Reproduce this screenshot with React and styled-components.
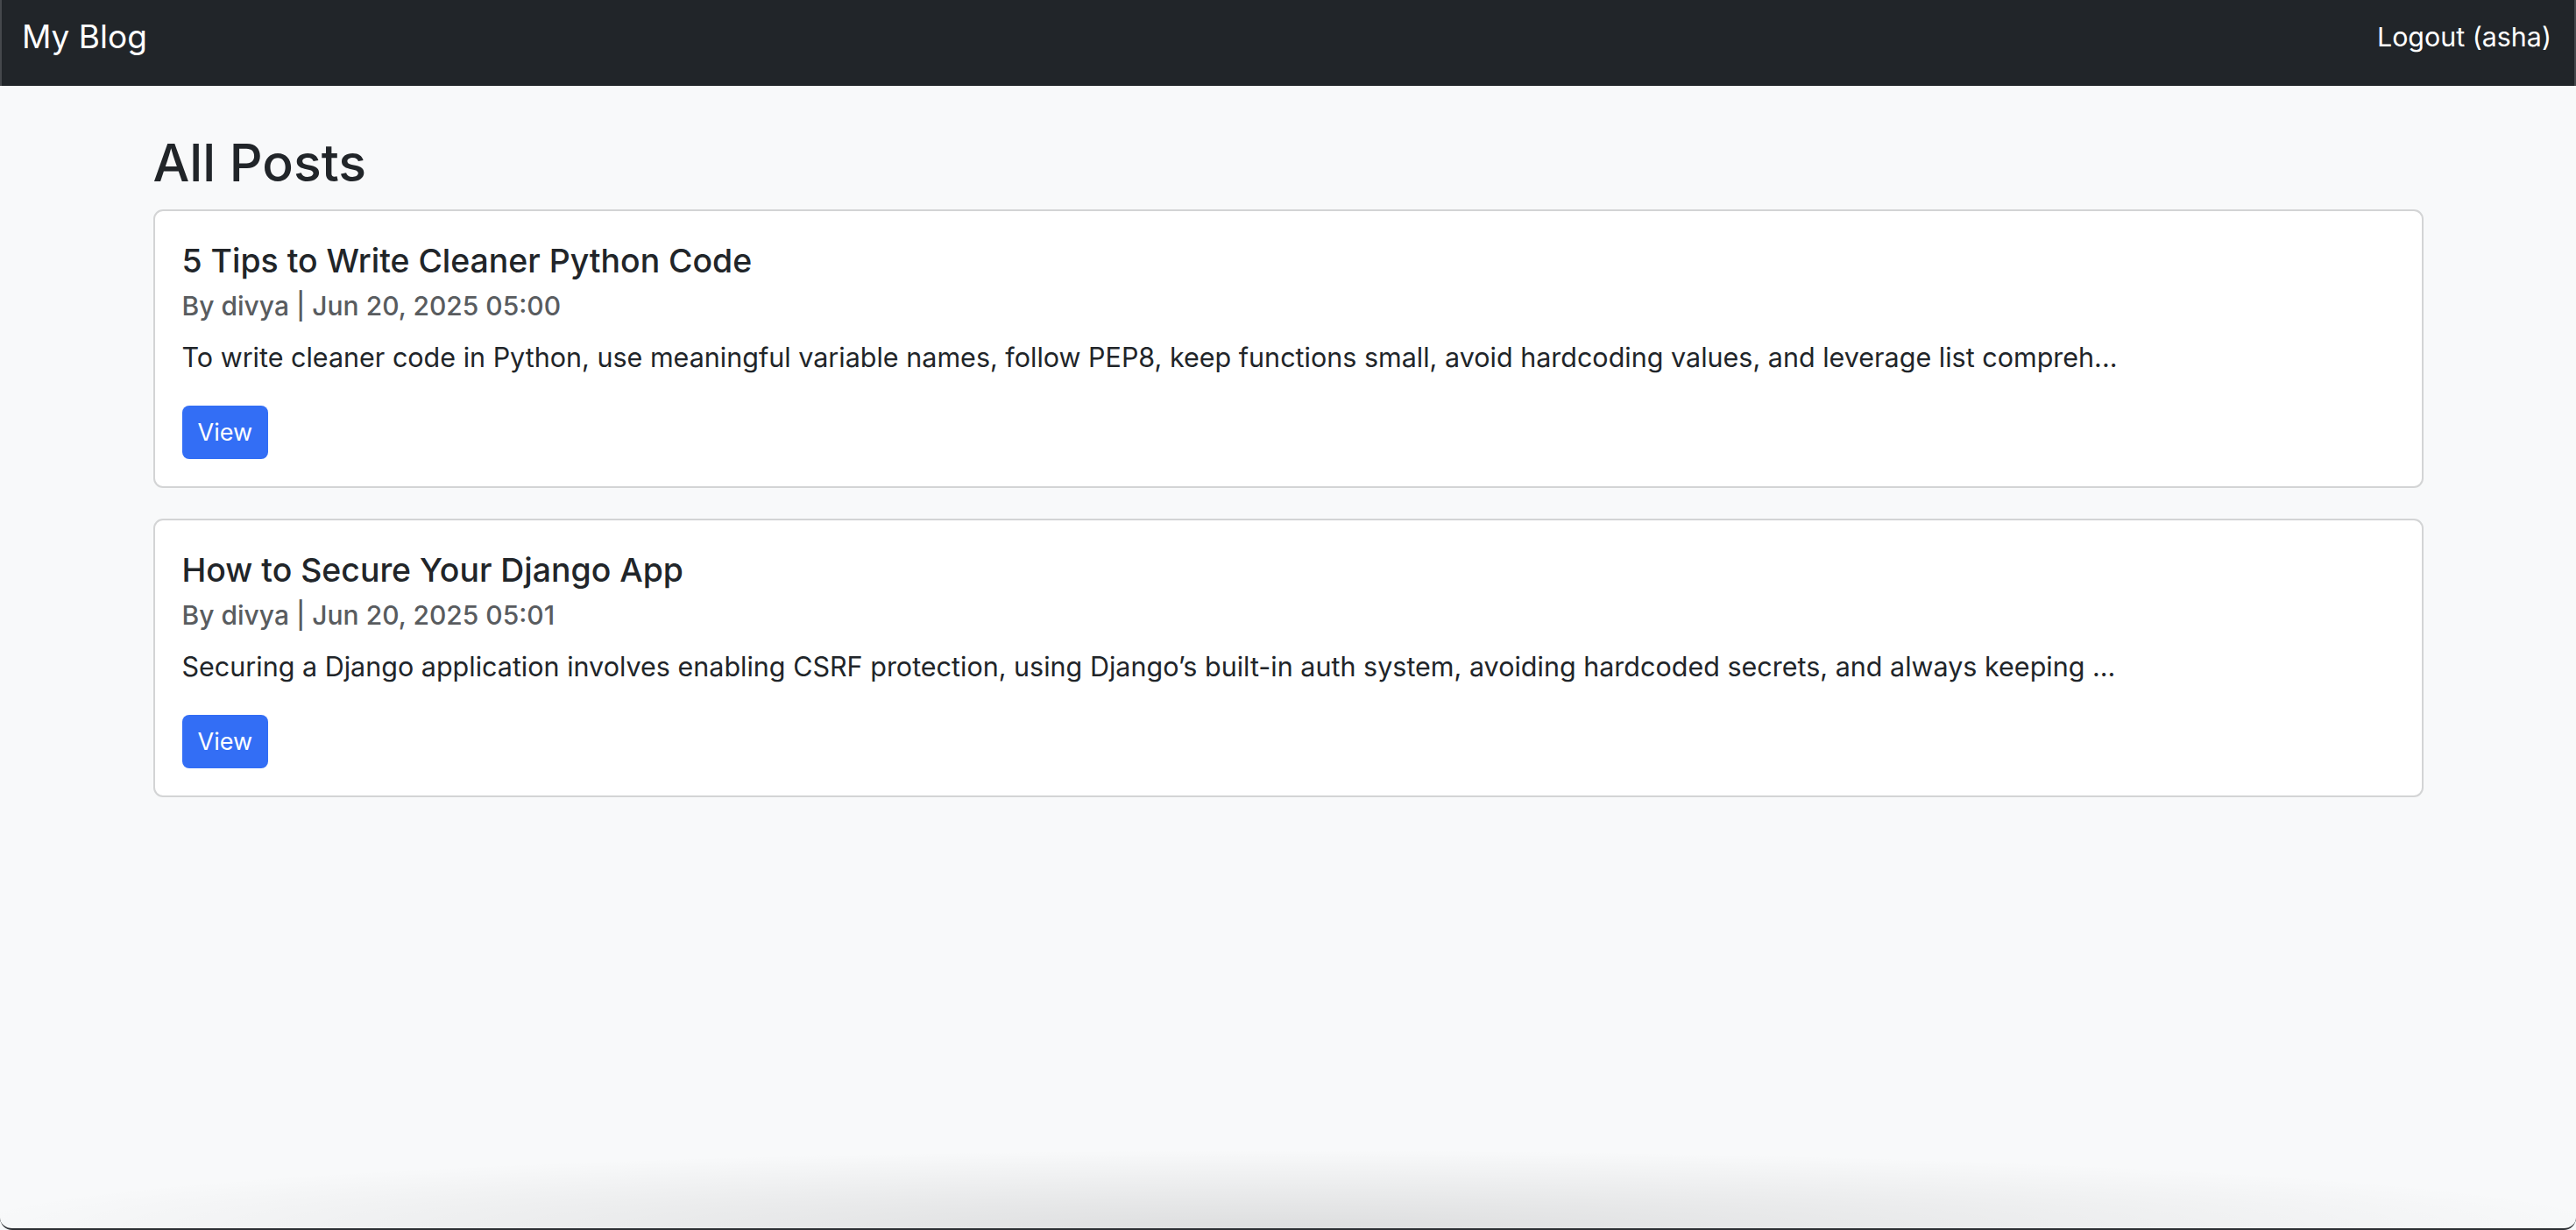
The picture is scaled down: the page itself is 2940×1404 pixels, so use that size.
import React from 'react'
import styled, { createGlobalStyle } from 'styled-components'

const GlobalStyle = createGlobalStyle`
    * {
        box-sizing: border-box;
    }
    body {
        margin: 0;
        font-family: Inter, "Noto Sans", sans-serif;
        color: #212529;
        background: #f8f9fa;
    }
`;

const Page = styled.div`
    min-height: 1404px;
    background:
        radial-gradient(ellipse 52% 90px at 50% 100%, rgba(0, 0, 0, 0.11), rgba(0, 0, 0, 0) 100%),
        #f8f9fa;
    border-bottom: 2px solid #2b2e32;
    border-radius: 0 0 14px 14px;
`;

const Navbar = styled.nav`
    height: 98px;
    display: flex;
    align-items: center;
    justify-content: space-between;
    padding: 0 26px 14px 23px;
    background: #212529;
    border-left: 2px solid #45484c;
    border-right: 2px solid #45484c;
`;

const Brand = styled.a`
    font-size: 37px;
    line-height: 48px;
    color: #fff;
    text-decoration: none;
`;

const NavLink = styled.a`
    font-size: 30.4px;
    line-height: 37px;
    color: #fff;
    text-decoration: none;
`;

const Container = styled.main`
    max-width: 2591px;
    margin: 0 auto;
    padding-top: 50px;
`;

const Heading = styled.h2`
    margin: 0 0 15px;
    font-size: 59px;
    line-height: 76px;
    font-weight: 500;
`;

const PostCard = styled.article`
    background: #fff;
    border: 2px solid #d3d4d5;
    border-radius: 11px;
    padding: 33px 31px 31px;
    margin-bottom: 35px;
`;

const PostTitle = styled.h5`
    margin: 0 0 9px;
    font-size: 37.4px;
    line-height: 48px;
    font-weight: 500;
`;

const PostMeta = styled.h6`
    margin: 0 0 18px;
    font-size: 30px;
    line-height: 36px;
    font-weight: 500;
    color: #595c5f;
`;

const Excerpt = styled.p`
    margin: 0 0 33px;
    font-size: 30.5px;
    line-height: 45px;
`;

const ViewButton = styled.a`
    display: inline-flex;
    align-items: center;
    justify-content: center;
    height: 61px;
    padding: 0 18px;
    border-radius: 8px;
    background: #336ef5;
    color: #fff;
    font-size: 27px;
    text-decoration: none;
`;

const posts = [
    {
        id: 1,
        title: '5 Tips to Write Cleaner Python Code',
        author: 'divya',
        date: 'Jun 20, 2025 05:00',
        excerpt: 'To write cleaner code in Python, use meaningful variable names, follow PEP8, keep functions small, avoid hardcoding values, and leverage list compreh...',
    },
    {
        id: 2,
        title: 'How to Secure Your Django App',
        author: 'divya',
        date: 'Jun 20, 2025 05:01',
        excerpt: 'Securing a Django application involves enabling CSRF protection, using Django\u2019s built-in auth system, avoiding hardcoded secrets, and always keeping ...',
    },
];

const App = () => {
    return (
        <Page>
            <GlobalStyle />
            <Navbar>
                <Brand href="#">My Blog</Brand>
                <NavLink href="#">Logout (asha)</NavLink>
            </Navbar>
            <Container>
                <Heading>All Posts</Heading>
                {posts.map(({ id, title, author, date, excerpt }) => (
                    <PostCard key={id}>
                        <PostTitle>{title}</PostTitle>
                        <PostMeta>By {author} | {date}</PostMeta>
                        <Excerpt>{excerpt}</Excerpt>
                        <ViewButton href="#">View</ViewButton>
                    </PostCard>
                ))}
            </Container>
        </Page>
    )
}

export default App
